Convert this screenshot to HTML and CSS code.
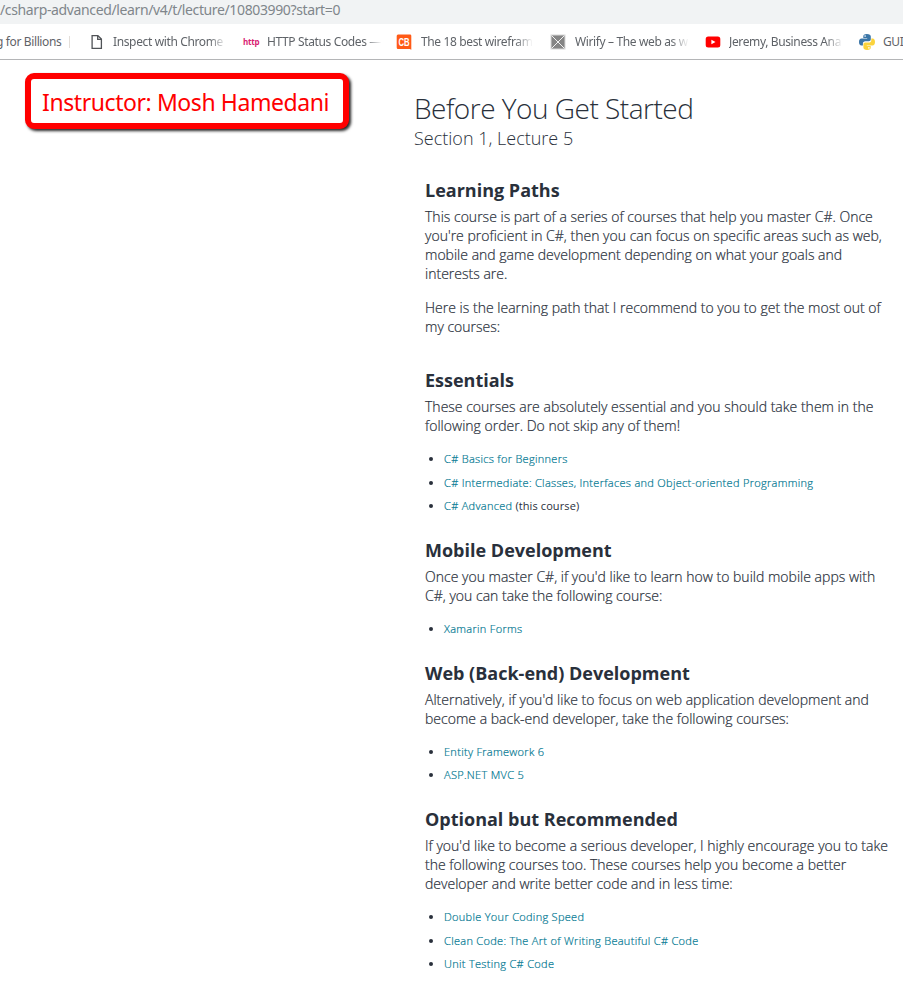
FILE: index.html
```html
<!DOCTYPE html>
<html lang="en">
<head>
<meta charset="utf-8">
<title>Before You Get Started</title>
<link rel="stylesheet" href="styles.css">
</head>
<body>
<header>
  <div class="address"><span class="url">/csharp-advanced/learn/v4/t/lecture/10803990?start=0</span></div>
  <nav class="bookmarks">
    <a class="bookmark bm-first"><span class="label">g for Billions</span><i class="divider"></i></a>
    <a class="bookmark bm-inspect">
      <svg class="icon" width="16" height="16" viewBox="0 0 16 16"><path d="M3.1 1.6H8.9L12.4 5.1V14.4H3.1ZM8.7 1.6V5.4H12.4" fill="#fff" stroke="#505357" stroke-width="1.3"/></svg>
      <span class="label fade">Inspect with Chrome</span></a>
    <a class="bookmark bm-http"><span class="http">http</span><span class="label fade">HTTP Status Codes —</span></a>
    <a class="bookmark bm-cb">
      <svg class="icon" width="16" height="16" viewBox="0 0 16 16"><path d="M2 .5H14Q15.3.5 15.3 1.8V15.8L13.8 15H2Q.7 15 .7 13.5V2Q.7.5 2 .5Z" fill="#ff5a16"/><text class="cb" x="2.6" y="11.9" textLength="10.6" lengthAdjust="spacingAndGlyphs">CB</text></svg>
      <span class="label fade">The 18 best wirefram</span></a>
    <a class="bookmark bm-wirify">
      <svg class="icon" width="16" height="16" viewBox="0 0 16 16"><path d="M.5.5H15.5V15.5H.5Z" fill="#d7d7d7"/><path d="M1.5 1.5H14.5V14.5H1.5Z" fill="#858585"/><path d="M1.5 1.5L14.5 14.5M14.5 1.5L1.5 14.5" stroke="#f0f0f0"/></svg>
      <span class="label fade">Wirify – The web as w</span></a>
    <a class="bookmark bm-youtube">
      <svg class="icon" width="16" height="16" viewBox="0 0 16 16"><rect x=".7" y="2.5" width="14.6" height="11" rx="2.5" fill="#f00"/><path d="M6.4 5.7V10.3L10.5 8Z" fill="#fff"/></svg>
      <span class="label fade">Jeremy, Business Ana</span></a>
    <a class="bookmark bm-python">
      <svg class="icon" width="16" height="16" viewBox="0 0 16 16"><path d="M7.9 0C5 0 4.3 1.1 4.3 2.4V4H8.2V4.6H2.6C.8 4.6 0 6 0 8S.8 11.5 2.5 11.5H3.9V9.6C3.9 8.2 5 7.3 6.2 7.3H9.9C11 7.3 11.8 6.4 11.8 5.3V2.4C11.8 1 10.5 0 7.9 0Z" fill="#3b76a8"/><path d="M8.1 16C11 16 11.7 14.9 11.7 13.6V12H7.8V11.4H13.4C15.2 11.4 16 10 16 8S15.2 4.5 13.5 4.5H12.3V6.2C12.3 7.6 11.2 8.5 10 8.5H6.3C5.2 8.5 4.4 9.4 4.4 10.5V13.6C4.4 15 5.7 16 8.1 16Z" fill="#fbd33c"/><circle cx="6.1" cy="2.1" r=".8" fill="#fff"/><circle cx="9.9" cy="13.9" r=".8" fill="#fff"/></svg>
      <span class="label">GUI</span></a>
  </nav>
</header>
<div class="layout">
  <aside><div class="callout">Instructor: Mosh Hamedani</div></aside>
  <main>
    <h1>Before You Get Started</h1>
    <div class="subtitle">Section 1, Lecture 5</div>
    <article>
      <section class="intro">
        <h2>Learning Paths</h2>
        <p>This course is part of a series of courses that help you master C#. Once<br>you're proficient in C#, then you can focus on specific areas such as web,<br>mobile and game development depending on what your goals and<br>interests are.</p>
        <p>Here is the learning path that I recommend to you to get the most out of<br>my courses:</p>
      </section>
      <section>
        <h2>Essentials</h2>
        <p>These courses are absolutely essential and you should take them in the<br>following order. Do not skip any of them!</p>
        <ul>
          <li><a>C# Basics for Beginners</a></li>
          <li><a>C# Intermediate: Classes, Interfaces and Object-oriented Programming</a></li>
          <li><a>C# Advanced</a> (this course)</li>
        </ul>
      </section>
      <section>
        <h2>Mobile Development</h2>
        <p>Once you master C#, if you'd like to learn how to build mobile apps with<br>C#, you can take the following course:</p>
        <ul><li><a>Xamarin Forms</a></li></ul>
      </section>
      <section>
        <h2>Web (Back-end) Development</h2>
        <p>Alternatively, if you'd like to focus on web application development and<br>become a back-end developer, take the following courses:</p>
        <ul>
          <li><a>Entity Framework 6</a></li>
          <li><a>ASP.NET MVC 5</a></li>
        </ul>
      </section>
      <section>
        <h2>Optional but Recommended</h2>
        <p>If you'd like to become a serious developer, I highly encourage you to take<br>the following courses too. These courses help you become a better<br>developer and write better code and in less time:</p>
        <ul>
          <li><a>Double Your Coding Speed</a></li>
          <li><a>Clean Code: The Art of Writing Beautiful C# Code</a></li>
          <li><a>Unit Testing C# Code</a></li>
        </ul>
      </section>
    </article>
  </main>
</div>
</body>
</html>
```
FILE: styles.css
```css
* { box-sizing: border-box; }
body {
  margin: 0;
  height: 984px;
  overflow: hidden;
  background: #fff;
  color: #29303b;
  font-family: "Open Sans", sans-serif;
  white-space: nowrap;
}
.address {
  height: 24px;
  background: #f1f3f4;
  color: #80868b;
  font: 14px/20px "Noto Sans", sans-serif;
  letter-spacing: -0.37px;
}
.bookmarks {
  display: flex;
  height: 36px;
  border-bottom: 1px solid #b4b5b7;
  color: #5f6368;
  font: 12px/35px "Noto Sans", sans-serif;
  letter-spacing: -0.37px;
}
.bookmark { display: flex; align-items: center; flex: none; }
.label { flex: 1; }
.fade { -webkit-mask-image: linear-gradient(to right, #000 calc(100% - 18px), transparent); mask-image: linear-gradient(to right, #000 calc(100% - 18px), transparent); }
.icon { flex: none; margin-right: 8px; }
.cb { fill: #fff; font: bold 10.5px "Liberation Sans", sans-serif; }
.bm-first { width: 89px; }
.bm-first .label { flex: none; width: 73px; margin-left: -4px; }
.divider { width: 1px; height: 12px; background: #e3ded9; }
.bm-inspect { width: 154px; padding-right: 16px; }
.bm-http { width: 153px; padding-right: 14px; }
.http { flex: none; width: 24px; color: #d81b72; font: bold 8px/16px "Open Sans", sans-serif; letter-spacing: -0.2px; }
.bm-cb { width: 154px; padding-right: 17px; }
.bm-cb .icon { margin-right: 9px; }
.bm-wirify { width: 155px; padding-right: 16px; }
.bm-wirify .icon { margin-right: 9px; }
.bm-youtube { width: 154px; padding-right: 16px; }
.layout { display: flex; }
aside { flex: none; width: 414px; padding: 13px 0 0 25px; }
.callout {
  width: 324px;
  height: 56px;
  padding-left: 11px;
  border: 6px solid #f00;
  border-radius: 9px;
  box-shadow: 2px 2px 3px rgba(0, 0, 0, .85);
  background: #fff;
  color: #f00;
  font: 23px/46px "Noto Sans", sans-serif;
  letter-spacing: -0.42px;
}
main { flex: none; width: 489px; padding-top: 30px; }
h1 { margin: 0; font-size: 28px; font-weight: 300; line-height: 37px; letter-spacing: -0.5px; }
.subtitle { font-size: 18px; font-weight: 300; line-height: 23px; }
article { padding: 27.5px 0 0 11px; }
section { margin-bottom: 20.5px; }
.intro { margin-bottom: 32.5px; }
h2 { margin: 0 0 4px; font-size: 18px; font-weight: 700; line-height: 25px; }
p { margin: 0 0 15px; font-size: 14px; font-weight: 300; line-height: 19px; letter-spacing: 0.01px; -webkit-text-stroke: 0.2px #29303b; }
p:last-child { margin: 0; }
ul { margin: -2.7px 0 0; padding: 0 0 0 19px; }
li { font-size: 11px; line-height: 23.25px; letter-spacing: 0.1px; }
li a { color: #007791; font-weight: 300; letter-spacing: 0.3px; -webkit-text-stroke: 0.2px #007791; }
```
